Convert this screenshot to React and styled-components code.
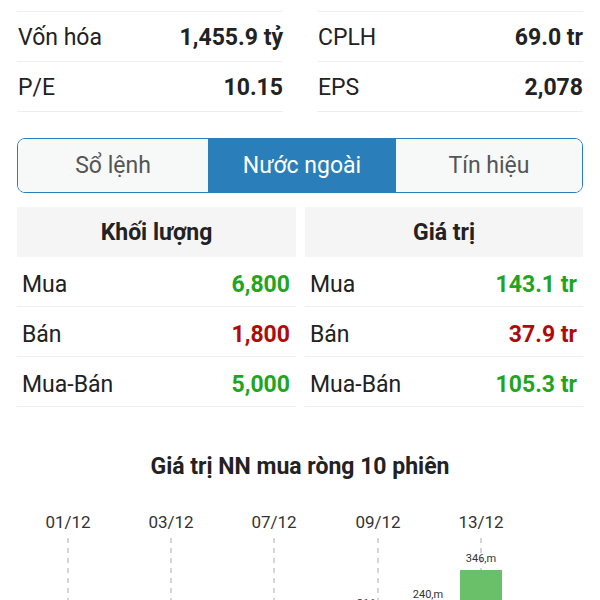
import styled, { createGlobalStyle } from "styled-components";

const GlobalStyle = createGlobalStyle`
  body {
    margin: 0;
    background: #ffffff;
    font-family: Roboto, "Liberation Sans", sans-serif;
    color: #222222;
  }
`;

const Page = styled.div`
  width: 600px;
  height: 600px;
  overflow: hidden;
  padding: 11px 17px 0;
  box-sizing: border-box;
`;

const StatsGrid = styled.div`
  display: grid;
  grid-template-columns: 1fr 1fr;
  column-gap: 34px;
`;

const StatsColumn = styled.div`
  border-top: 1px solid #eeeeee;
`;

const StatRow = styled.div`
  display: flex;
  align-items: center;
  justify-content: space-between;
  height: 50px;
  padding-top: 2px;
  box-sizing: border-box;
  border-bottom: 1px solid #eeeeee;
  font-size: 23px;
  padding-left: 1px;
`;

const StatValue = styled.span`
  font-weight: 700;
`;

const Tabs = styled.div`
  display: grid;
  grid-template-columns: 190px 188px 1fr;
  margin-top: 26px;
  height: 55px;
  border: 1.5px solid #2a7fba;
  border-radius: 8px;
  overflow: hidden;
  box-sizing: border-box;
`;

const Tab = styled.div`
  display: flex;
  align-items: center;
  justify-content: center;
  font-size: 23px;
  background: ${(p) => (p.$active ? "#2a7fba" : "#f7f9f9")};
  color: ${(p) => (p.$active ? "#ffffff" : "#555555")};
`;

const Tables = styled.div`
  display: grid;
  grid-template-columns: 279px 1fr;
  column-gap: 9px;
  margin-top: 14px;
`;

const TableHeader = styled.div`
  display: flex;
  align-items: center;
  justify-content: center;
  height: 50px;
  background: #f5f5f5;
  font-size: 23px;
  font-weight: 700;
`;

const TableRow = styled.div`
  display: flex;
  align-items: center;
  justify-content: space-between;
  height: 50px;
  padding: 5px 6px 0 5px;
  box-sizing: border-box;
  border-bottom: 1px solid #eeeeee;
  font-size: 23px;
`;

const Amount = styled.span`
  font-weight: 700;
  color: ${(p) => (p.$tone === "down" ? "#b00a0a" : "#1fa51f")};
`;

const ChartTitle = styled.div`
  margin-top: 48px;
  text-align: center;
  font-size: 23px;
  font-weight: 700;
  line-height: 24px;
`;

const Chart = styled.svg`
  display: block;
  margin: 21px 0 0 -17px;
  font-family: Roboto, "Liberation Sans", sans-serif;
`;

const stats = [
  [
    ["Vốn hóa", "1,455.9 tỷ"],
    ["P/E", "10.15"],
  ],
  [
    ["CPLH", "69.0 tr"],
    ["EPS", "2,078"],
  ],
];

const tables = [
  {
    title: "Khối lượng",
    rows: [
      ["Mua", "6,800", "up"],
      ["Bán", "1,800", "down"],
      ["Mua-Bán", "5,000", "up"],
    ],
  },
  {
    title: "Giá trị",
    rows: [
      ["Mua", "143.1 tr", "up"],
      ["Bán", "37.9 tr", "down"],
      ["Mua-Bán", "105.3 tr", "up"],
    ],
  },
];

const dates = [
  ["01/12", 68],
  ["03/12", 171],
  ["07/12", 274],
  ["09/12", 378],
  ["13/12", 481],
];

const App = () => {
  return (
    <Page>
      <GlobalStyle />
      <StatsGrid>
        {stats.map((col, i) => (
          <StatsColumn key={i}>
            {col.map(([label, value]) => (
              <StatRow key={label}>
                <span>{label}</span>
                <StatValue>{value}</StatValue>
              </StatRow>
            ))}
          </StatsColumn>
        ))}
      </StatsGrid>

      <Tabs>
        <Tab>Sổ lệnh</Tab>
        <Tab $active>Nước ngoài</Tab>
        <Tab>Tín hiệu</Tab>
      </Tabs>

      <Tables>
        {tables.map((t) => (
          <div key={t.title}>
            <TableHeader>{t.title}</TableHeader>
            {t.rows.map(([label, value, tone]) => (
              <TableRow key={label}>
                <span>{label}</span>
                <Amount $tone={tone}>{value}</Amount>
              </TableRow>
            ))}
          </div>
        ))}
      </Tables>

      <ChartTitle>Giá trị NN mua ròng 10 phiên</ChartTitle>

      <Chart width="600" height="120" viewBox="0 0 600 120">
        {dates.map(([d, x]) => (
          <g key={d}>
            <text x={x} y="28" textAnchor="middle" fontSize="17" fill="#333">
              {d}
            </text>
            <line
              x1={x}
              y1="38"
              x2={x}
              y2="120"
              stroke="#aaa"
              strokeWidth="1"
              strokeDasharray="5 5"
            />
          </g>
        ))}
        <rect x="460" y="70" width="42" height="60" fill="#6abf69" />
        <text x="481" y="62" textAnchor="middle" fontSize="11" fill="#333">
          346,m
        </text>
        <text x="428" y="98" textAnchor="middle" fontSize="11" fill="#333">
          240,m
        </text>
        <text x="372" y="107" textAnchor="middle" fontSize="11" fill="#333">
          216,m
        </text>
      </Chart>
    </Page>
  );
};

export default App;
